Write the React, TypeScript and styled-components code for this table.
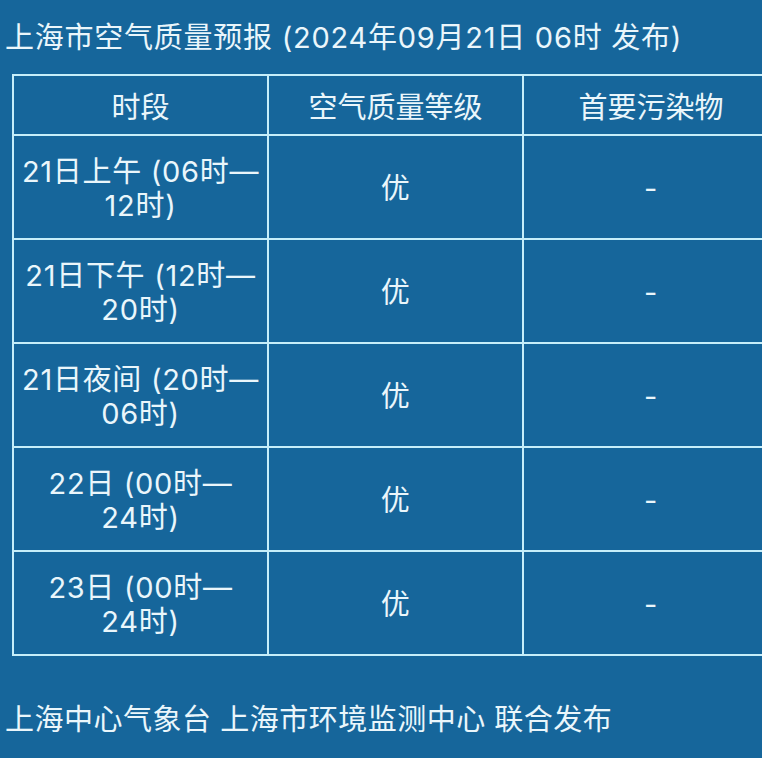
import React from 'react'
import styled, { createGlobalStyle } from 'styled-components'

const GlobalStyle = createGlobalStyle`
  html, body {
    margin: 0;
    padding: 0;
    background: #16669b;
    overflow: hidden;
  }
  body {
    font-family: "Inter", "Noto Sans CJK SC", sans-serif;
    color: #eaf6fb;
  }
`

const Page = styled.div`
  width: 762px;
  height: 758px;
  overflow: hidden;
  background: #16669b;
`

const Title = styled.div`
  height: 74px;
  padding-left: 5px;
  font-size: 29px;
  letter-spacing: 0.75px;
  line-height: 76px;
  white-space: nowrap;
`

const Table = styled.table`
  margin-left: 12px;
  width: 765px;
  min-width: 765px;
  table-layout: fixed;
  border-collapse: collapse;
  border: 2px solid #c6eef9;
  border-right: none;
`

const Col = styled.col`
  width: 255px;
`

const HeadCell = styled.th`
  height: 58px;
  padding: 0;
  border: 2px solid #c6eef9;
  font-size: 29px;
  font-weight: 400;
  text-align: center;
  vertical-align: middle;
  &:last-child {
    border-right: none;
  }
`

const Cell = styled.td`
  height: 98px;
  padding: 4px 4px 0;
  border: 2px solid #c6eef9;
  font-size: 29px;
  letter-spacing: 0.7px;
  line-height: 34px;
  text-align: center;
  vertical-align: middle;
  &:last-child {
    border-right: none;
  }
`

const Line = styled.div`
  white-space: nowrap;
`

const Footer = styled.div`
  padding: 45px 0 0 5px;
  font-size: 29px;
  letter-spacing: 0.5px;
  line-height: 38px;
  white-space: nowrap;
`

type Row = { period: [string, string]; level: string; pollutant: string }

const rows: Row[] = [
  { period: ['21日上午 (06时—', '12时)'], level: '优', pollutant: '-' },
  { period: ['21日下午 (12时—', '20时)'], level: '优', pollutant: '-' },
  { period: ['21日夜间 (20时—', '06时)'], level: '优', pollutant: '-' },
  { period: ['22日 (00时—', '24时)'], level: '优', pollutant: '-' },
  { period: ['23日 (00时—', '24时)'], level: '优', pollutant: '-' },
]

export default function App() {
  return (
    <Page>
      <GlobalStyle />
      <Title>上海市空气质量预报 (2024年09月21日 06时 发布)</Title>
      <Table>
        <colgroup>
          <Col />
          <Col />
          <Col />
        </colgroup>
        <thead>
          <tr>
            <HeadCell>时段</HeadCell>
            <HeadCell>空气质量等级</HeadCell>
            <HeadCell>首要污染物</HeadCell>
          </tr>
        </thead>
        <tbody>
          {rows.map((r, i) => (
            <tr key={i}>
              <Cell>
                <Line>{r.period[0]}</Line>
                <Line>{r.period[1]}</Line>
              </Cell>
              <Cell>{r.level}</Cell>
              <Cell>{r.pollutant}</Cell>
            </tr>
          ))}
        </tbody>
      </Table>
      <Footer>上海中心气象台 上海市环境监测中心 联合发布</Footer>
    </Page>
  )
}
